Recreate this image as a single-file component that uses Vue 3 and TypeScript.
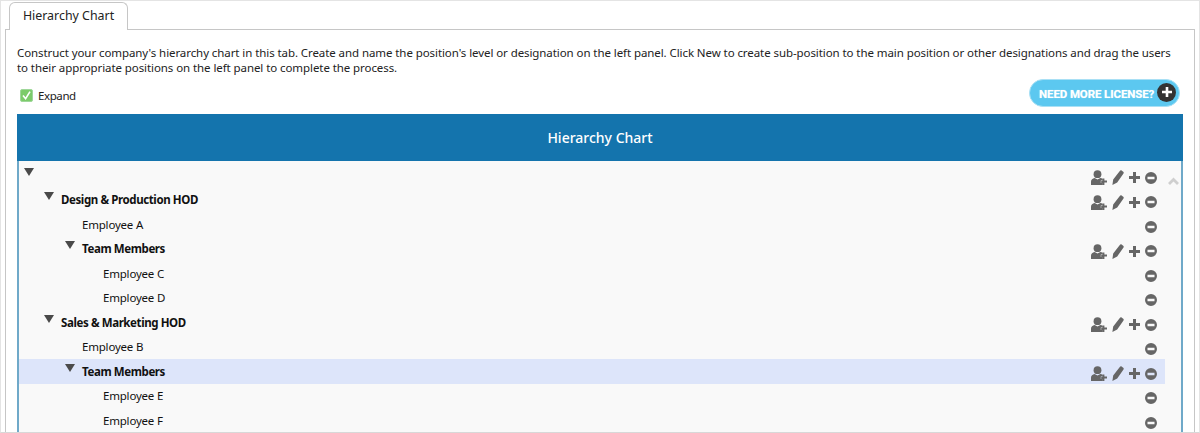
<script setup lang="ts">
interface TreeRow {
  label: string
  level: number
  group: boolean
  selected?: boolean
}

const rows: TreeRow[] = [
  { label: '', level: 0, group: true },
  { label: 'Design & Production HOD', level: 1, group: true },
  { label: 'Employee A', level: 2, group: false },
  { label: 'Team Members', level: 2, group: true },
  { label: 'Employee C', level: 3, group: false },
  { label: 'Employee D', level: 3, group: false },
  { label: 'Sales & Marketing HOD', level: 1, group: true },
  { label: 'Employee B', level: 2, group: false },
  { label: 'Team Members', level: 2, group: true, selected: true },
  { label: 'Employee E', level: 3, group: false },
  { label: 'Employee F', level: 3, group: false },
]
</script>

<template>
  <div class="page">
    <div class="tab">Hierarchy Chart</div>
    <div class="panel">
      <p class="intro">
        Construct your company's hierarchy chart in this tab. Create and name the position's level or designation on the left panel. Click New to create sub-position to the main position or other designations and drag the users to their appropriate positions on the left panel to complete the process.
      </p>
      <div class="toolbar">
        <label class="expand">
          <svg class="check" width="13" height="13" viewBox="0 0 13 13">
            <rect x="0.5" y="0.5" width="12" height="12" rx="1.5" fill="#7ccb6a" stroke="#9fd79a" />
            <path d="M3 6.5l2.6 3.2L10 2.6" fill="none" stroke="#fff" stroke-width="1.6" />
          </svg>
          Expand
        </label>
        <button class="license">
          <span class="license-text">NEED MORE LICENSE?</span>
          <span class="license-plus">
            <svg width="12" height="12" viewBox="0 0 12 12">
              <path d="M6 1v10M1 6h10" stroke="#fff" stroke-width="2.6" />
            </svg>
          </span>
        </button>
      </div>
      <div class="chart">
        <div class="chart-title">Hierarchy Chart</div>
        <div class="tree">
          <div class="tree-rows">
            <div
              v-for="(row, i) in rows"
              :key="i"
              class="row"
              :class="[`level-${row.level}`, { selected: row.selected, group: row.group }]"
            >
              <span v-if="row.group" class="caret"></span>
              <span class="label">{{ row.label }}</span>
              <span class="actions">
                <template v-if="row.group">
                  <svg class="ic" width="16" height="15" viewBox="0 0 16 15">
                    <circle cx="6.5" cy="4.2" r="3.9" />
                    <path d="M0 15v-3.2c0-2.2 1.6-3.5 3.6-3.8l2.9 1.5L9.4 8c.9.1 1.7.5 2.3 1v1.6H9.8v2.3h1.9V15z" />
                    <path d="M11.4 8.6h2v2H16v2h-2.6V15h-2v-2.1h-1.2v-2h1.2z" />
                  </svg>
                  <svg class="ic" width="12" height="15" viewBox="0 0 12 15">
                    <path d="M7.8.9c.5-.6 1.2-.7 1.8-.3l1.6 1.2c.6.4.7 1.2.3 1.8L5.2 12.4.4 15l.8-5.5z" />
                  </svg>
                  <svg class="ic" width="11" height="11" viewBox="0 0 11 11">
                    <path d="M4 0h3v4h4v3H7v4H4V7H0V4h4z" />
                  </svg>
                </template>
                <svg class="ic" width="12" height="12" viewBox="0 0 12 12">
                  <path fill-rule="evenodd" d="M6 0a6 6 0 1 1 0 12A6 6 0 0 1 6 0zM2.5 4.8v2.4h7V4.8z" />
                </svg>
              </span>
            </div>
          </div>
          <div class="scroll">
            <svg width="11" height="8" viewBox="0 0 11 8">
              <path d="M1 7l4.5-4.5L10 7" fill="none" stroke="#cfcfcf" stroke-width="2.8" />
            </svg>
          </div>
        </div>
      </div>
    </div>
  </div>
</template>

<style>
html,
body {
  margin: 0;
  background: #fff;
  overflow: hidden;
}
</style>

<style scoped>
.page {
  box-sizing: border-box;
  height: 433px;
  padding: 1px 4px 0 4px;
  font-family: 'Noto Sans', 'Open Sans', sans-serif;
  font-size: 11.5px;
  letter-spacing: -0.08px;
  color: #222;
  overflow: hidden;
  border-top: 1px solid #e4e4e4;
  border-left: 1px solid #e4e4e4;
  border-right: 1px solid #e4e4e4;
  border-bottom: 1px solid #d8d8d8;
}

.tab {
  box-sizing: border-box;
  width: 119px;
  height: 28px;
  margin-left: 4px;
  margin-bottom: -1px;
  position: relative;
  z-index: 1;
  background: #fff;
  border: 1px solid #c6c6c6;
  border-bottom: 0;
  border-radius: 6px 6px 0 0;
  text-align: center;
  line-height: 25px;
  font-size: 12.4px;
  letter-spacing: 0;
}

.panel {
  border: 1px solid #c6c6c6;
  border-bottom: 0;
  padding: 15px 11px 0 11px;
  height: 420px;
  box-sizing: border-box;
}

.intro {
  margin: 0;
  line-height: 15px;
}

.toolbar {
  display: flex;
  justify-content: space-between;
  align-items: flex-start;
  height: 27px;
  margin-top: 5px;
  padding-right: 3px;
}

.expand {
  display: flex;
  align-items: center;
  gap: 5px;
  padding-left: 3px;
  padding-top: 8px;
  letter-spacing: -0.4px;
}

.check {
  flex: none;
}

.license {
  display: flex;
  align-items: center;
  justify-content: space-between;
  box-sizing: border-box;
  width: 151px;
  height: 28px;
  margin-top: -1px;
  padding: 0 3px 0 9px;
  background: #5cc8f0;
  border: 1px solid #a9e0f5;
  border-radius: 14px;
  color: #fff;
  font-family: 'Roboto', sans-serif;
  font-weight: 700;
  font-size: 11.5px;
  letter-spacing: -0.1px;
}

.license-text {
  white-space: nowrap;
  padding-top: 1px;
  text-shadow: 0 0 1px rgba(255, 255, 255, 0.6);
}

.license-plus {
  display: flex;
  align-items: center;
  justify-content: center;
  flex: none;
  width: 19px;
  height: 19px;
  margin-bottom: 2px;
  border-radius: 50%;
  background: #333;
}

.chart {
  margin-top: 7px;
}

.chart-title {
  height: 47px;
  line-height: 47px;
  background: #1474ad;
  color: #fff;
  text-align: center;
  font-size: 14px;
  font-weight: 500;
  letter-spacing: 0;
}

.tree {
  display: flex;
  border-left: 2px solid #6fa9c9;
  border-right: 2px solid #6fa9c9;
  background: #f9f9f9;
  padding-top: 2px;
  height: 300px;
}

.tree-rows {
  flex: 1;
}

.scroll {
  width: 16px;
  padding-top: 10px;
  text-align: center;
}

.row {
  box-sizing: border-box;
  display: flex;
  align-items: center;
  height: 24.5px;
  color: #111;
  letter-spacing: -0.2px;
}

.row.group .label {
  font-weight: 700;
  font-size: 11.5px;
  letter-spacing: -0.4px;
}

.row.selected {
  background: #dde5fa;
}

.level-0 {
  padding-left: 5px;
}

.level-1 {
  padding-left: 25px;
}

.level-2 {
  padding-left: 46px;
}

.level-3 {
  padding-left: 67px;
}

.caret {
  flex: none;
  width: 0;
  height: 0;
  margin-top: -7px;
  margin-right: 7px;
  border-left: 5px solid transparent;
  border-right: 5px solid transparent;
  border-top: 8px solid #4a4a4a;
}

.level-2:not(.group) .label,
.level-3 .label {
  margin-left: 17px;
}

.actions {
  margin-left: auto;
  display: flex;
  align-items: center;
  gap: 5px;
  padding-right: 8px;
  padding-top: 5px;
}

.ic {
  fill: #666;
  flex: none;
}
</style>
